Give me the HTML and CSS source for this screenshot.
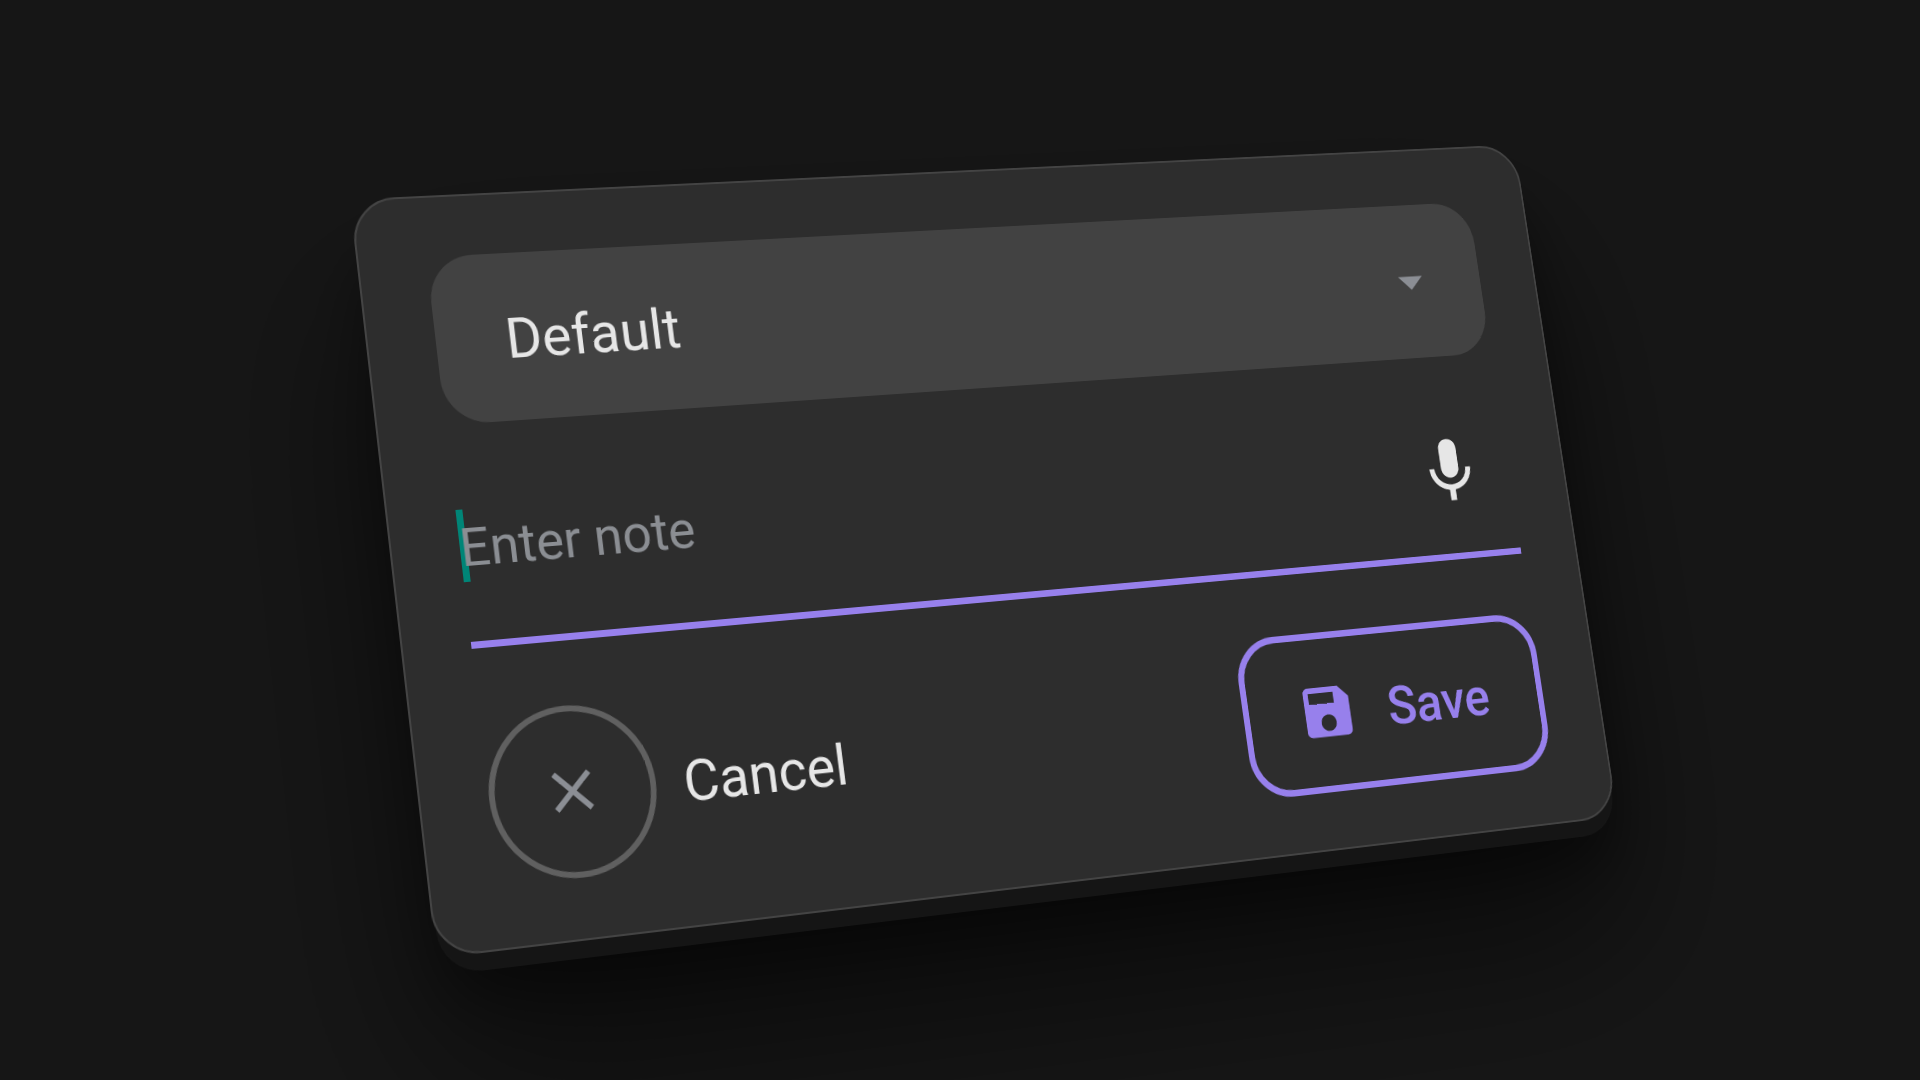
FILE: index.html
```html
<!DOCTYPE html>
<html lang="en">
<head>
<meta charset="utf-8">
<title>Note</title>
<link rel="stylesheet" href="styles.css">
</head>
<body>
<main class="dialog">
  <div class="select">
    <span class="select-value">Default</span>
    <svg class="icon-arrow" viewBox="0 0 24 24"><path d="M7 10l5 5 5-5z"/></svg>
  </div>
  <div class="field">
    <span class="placeholder"><i class="caret"></i><span class="placeholder-text">Enter note</span></span>
    <svg class="icon-mic" viewBox="0 0 24 24"><path d="M12 14c1.66 0 2.99-1.34 2.99-3L15 5c0-1.66-1.34-3-3-3S9 3.34 9 5v6c0 1.66 1.34 3 3 3zm5.3-3c0 3-2.54 5.1-5.3 5.1S6.7 14 6.7 11H5c0 3.41 2.72 6.23 6 6.72V21h2v-3.28c3.28-.48 6-3.3 6-6.72h-1.7z"/></svg>
  </div>
  <div class="actions">
    <div class="cancel">
      <span class="cancel-circle"><svg class="icon-close" viewBox="0 0 24 24"><path d="M19 6.41L17.59 5 12 10.59 6.41 5 5 6.41 10.59 12 5 17.59 6.41 19 12 13.41 17.59 19 19 17.59 13.41 12z"/></svg></span>
      <span class="cancel-label">Cancel</span>
    </div>
    <div class="save">
      <svg class="save-outline" viewBox="0 0 363 172"><path d="M47 3.5H316a43.5 43.5 0 0 1 43.5 43.5V125a43.5 43.5 0 0 1-43.5 43.5H47A43.5 43.5 0 0 1 3.5 125V47A43.5 43.5 0 0 1 47 3.5z"/></svg>
      <svg class="icon-save" viewBox="0 0 24 24"><path d="M17 3H5c-1.11 0-2 .9-2 2v14c0 1.1.89 2 2 2h14c1.1 0 2-.9 2-2V7l-4-4zm-5 16c-1.66 0-3-1.34-3-3s1.34-3 3-3 3 1.34 3 3-1.34 3-3 3zm3-10H5V5h10v4z"/></svg>
      <span class="save-label">Save</span>
    </div>
  </div>
</main>
</body>
</html>
```
FILE: styles.css
```css
* { box-sizing: border-box; }

html, body {
  margin: 0;
  width: 1920px;
  height: 1080px;
  overflow: hidden;
  background: #161616;
}

body { font-family: Roboto, sans-serif; }

/* The dialog is laid out flat and tilted in space as a whole. */
.dialog {
  width: 1330px;
  height: 760px;
  padding: 60.5px 68.5px;
  border: 2px solid #444;
  border-radius: 46px;
  background: #2d2d2d;
  box-shadow:
    0 20px 0 -3px #151515,
    0 50px 60px -10px rgba(0, 0, 0, .4),
    0 115px 180px 5px rgba(0, 0, 0, .56);
  transform-origin: 0 0;
  transform: matrix3d(1.01718, -0.027902, 0, 0.000093128, 0.099789, 0.967447, 0, -0.000032728, 0, 0, 1, 0, 349.4, 199.4, 0, 1);
  will-change: transform;
}

svg { display: block; flex: none; fill: currentColor; }

.select {
  display: flex;
  align-items: center;
  justify-content: space-between;
  height: 172.5px;
  padding: 2px 51px 0 72.5px;
  border-radius: 47px;
  background: #424242;
  color: #e6e6e6;
}

.select-value { padding-top: 5px; font-size: 57.6px; line-height: 68px; }

.icon-arrow { width: 71px; height: 71px; color: #8b8e94; }

.field {
  display: flex;
  align-items: center;
  justify-content: space-between;
  height: 173px;
  margin-top: 53px;
  padding: 0 29.5px 27px 0;
  border-bottom: 7px solid #9780ec;
}

.placeholder {
  position: relative;
  display: flex;
  height: 73px;
  align-items: center;
  color: #8b8e93;
  font-size: 54px;
}

.caret {
  position: absolute;
  left: 0;
  top: 0;
  width: 7px;
  height: 73px;
  background: #008577;
}

.placeholder-text { position: relative; line-height: 64px; padding: 4px 0 0 .5px; }

.icon-mic { width: 86.4px; height: 86.4px; margin-top: 11px; color: #e6e6e6; }

.actions {
  display: flex;
  justify-content: space-between;
  height: 172px;
  margin-top: 64.5px;
}

.cancel {
  display: flex;
  align-items: center;
  gap: 28.5px;
  color: #e6e6e6;
  font-size: 57.6px;
  line-height: 68px;
}

.cancel-circle {
  display: grid;
  place-items: center;
  width: 172px;
  height: 172px;
  border: 6px solid #606060;
  border-radius: 50%;
  color: #8b8e94;
}

.icon-close { width: 69px; height: 69px; }

.cancel-label { padding: 6px 0 0 1px; }

.save-label { padding-top: 5px; }

.save {
  position: relative;
  display: flex;
  align-items: center;
  gap: 36.5px;
  width: 363px;
  padding-left: 64.5px;
  color: #9780ec;
  font-size: 57.6px;
  font-weight: 500;
  line-height: 68px;
}

/* The outline is a stroked path, which stays smooth under the tilt. */
.save-outline {
  position: absolute;
  left: 0;
  top: 0;
  width: 363px;
  height: 172px;
  fill: none;
  stroke: currentColor;
  stroke-width: 7;
}

.icon-save { width: 71.5px; height: 71.5px; }
```
